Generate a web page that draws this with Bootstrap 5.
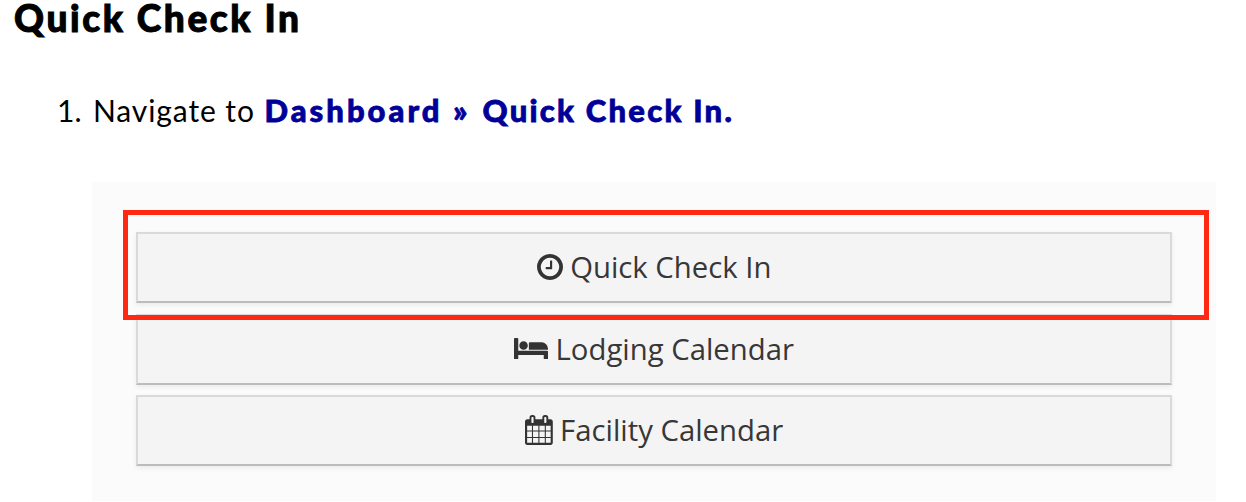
<!DOCTYPE html>
<html lang="en">
<head>
  <meta charset="UTF-8">
  <meta name="viewport" content="width=device-width, initial-scale=1">
  <title>Quick Check In</title>
  <link rel="stylesheet" href="https://cdn.jsdelivr.net/npm/bootstrap@5.3.0/dist/css/bootstrap.min.css">
  <style>
    body {
      font-family: Futura, Lato, sans-serif;
      color: #000;
      background-color: #fff;
    }

    .guide-title {
      font-size: 37px;
      font-weight: 900;
      line-height: 36px;
      padding-left: 14px;
      letter-spacing: 2.6px;
      -webkit-text-stroke: 1px #000;
      white-space: nowrap;
    }

    .step {
      font-size: 30px;
      line-height: 40px;
      margin-top: 54px;
      padding-left: 57px;
      white-space: nowrap;
    }

    .step-number {
      width: 36px;
    }

    .step-text {
      letter-spacing: 0.9px;
      margin-right: 2px;
    }

    .menu-path {
      color: #000099;
      font-size: 31px;
      font-weight: 900;
      letter-spacing: 2.25px;
      -webkit-text-stroke: 0.8px #000099;
    }

    .menu-path .path-root {
      letter-spacing: 3px;
    }

    .menu-path .path-arrow {
      margin: 0 3px 0 1px;
    }

    .screen {
      width: 1124px;
      height: 319px;
      margin: 52px 0 0 92px;
      padding: 50px 44px 0;
      background-color: #fbfbfb;
    }

    .menu-list {
      gap: 10.5px;
    }

    .menu-btn {
      height: 71px;
      border: 2px solid #dadada;
      border-bottom-color: #bcbcbc;
      border-radius: 0;
      background-color: #f4f4f4;
      box-shadow: 0 2px 5px rgba(0, 0, 0, 0.07);
      color: #373737;
      font-family: "Open Sans", sans-serif;
      font-size: 29.3px;
      line-height: 40px;
      padding: 0 0 1px;
      gap: 7.5px;
    }

    .menu-btn svg {
      fill: #333;
      flex: none;
    }

    /* red frame drawn over the first button */
    .highlight {
      top: -22px;
      left: -13px;
      width: 1086px;
      height: 110px;
      border: 5px solid #ff2812;
      pointer-events: none;
    }
  </style>
</head>
<body>

<h1 class="guide-title m-0">Quick Check In</h1>

<div class="step d-flex">
  <span class="step-number">1.</span>
  <div><span class="step-text">Navigate to</span> <strong class="menu-path"><span class="path-root">Dashboard</span> <span class="path-arrow">»</span> Quick Check In.</strong></div>
</div>

<div class="screen">
  <div class="menu-list d-flex flex-column position-relative">
    <button type="button" class="btn menu-btn d-flex align-items-center justify-content-center">
      <svg width="26" height="26" viewBox="0 128 1536 1536"><path d="M896 544v448q0 14-9 23t-23 9h-320q-14 0-23-9t-9-23v-64q0-14 9-23t23-9h224v-352q0-14 9-23t23-9h64q14 0 23 9t9 23zm416 352q0-148-73-273t-198-198-273-73-273 73-198 198-73 273 73 273 198 198 273 73 273-73 198-198 73-273zm224 0q0 209-103 385.5t-279.5 279.5-385.5 103-385.5-103-279.5-279.5-103-385.5 103-385.5 279.5-279.5 385.5-103 385.5 103 279.5 279.5 103 385.5z"/></svg>
      <span>Quick Check In</span>
    </button>
    <button type="button" class="btn menu-btn d-flex align-items-center justify-content-center">
      <svg width="34" height="21.3" viewBox="0 256 2048 1280"><path d="M256 1024h1728q26 0 45 19t19 45v448h-256v-256h-1536v256h-256v-1216q0-26 19-45t45-19h128q26 0 45 19t19 45v704zm576-320q0-106-75-181t-181-75-181 75-75 181 75 181 181 75 181-75 75-181zm1216 256v-64q0-159-112.5-271.5t-271.5-112.5h-704q-26 0-45 19t-19 45v384h1152z"/></svg>
      <span>Lodging Calendar</span>
    </button>
    <button type="button" class="btn menu-btn d-flex align-items-center justify-content-center">
      <svg width="27.8" height="30" viewBox="0 0 1664 1792"><path fill-rule="evenodd" d="M128 256H1536q52 0 90 38t38 90V1664q0 52-38 90t-90 38H128q-52 0-90-38T0 1664V384q0-52 38-90t90-38zM128 640v288h288V640zM480 640v288h320V640zM864 640v288h320V640zM1248 640v288h288V640zM128 992v320h288V992zM480 992v320h320V992zM864 992v320h320V992zM1248 992v320h288V992zM128 1376v288h288v-288zM480 1376v288h320v-288zM864 1376v288h320v-288zM1248 1376v288h288v-288z"/><g fill="#f4f4f4" stroke="#333" stroke-width="112"><rect x="328" y="56" width="240" height="472" rx="96"/><rect x="1096" y="56" width="240" height="472" rx="96"/></g></svg>
      <span>Facility Calendar</span>
    </button>
    <div class="highlight position-absolute"></div>
  </div>
</div>

<script src="https://cdn.jsdelivr.net/npm/bootstrap@5.3.0/dist/js/bootstrap.bundle.min.js"></script>
</body>
</html>
